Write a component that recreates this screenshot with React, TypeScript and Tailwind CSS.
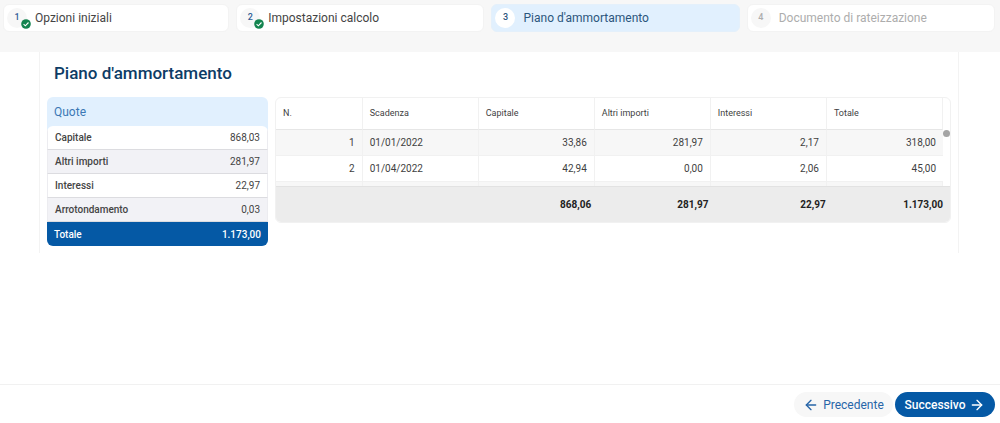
import { ArrowLeft, ArrowRight } from "lucide-react";
import clsx from "clsx";

type Step = { n: number; label: string; state: "done" | "active" | "disabled" };

const steps: Step[] = [
  { n: 1, label: "Opzioni iniziali", state: "done" },
  { n: 2, label: "Impostazioni calcolo", state: "done" },
  { n: 3, label: "Piano d'ammortamento", state: "active" },
  { n: 4, label: "Documento di rateizzazione", state: "disabled" },
];

const quote = [
  { label: "Capitale", value: "868,03" },
  { label: "Altri importi", value: "281,97" },
  { label: "Interessi", value: "22,97" },
  { label: "Arrotondamento", value: "0,03" },
];

const columns = ["N.", "Scadenza", "Capitale", "Altri importi", "Interessi", "Totale"];

const rate = [
  ["1", "01/01/2022", "33,86", "281,97", "2,17", "318,00"],
  ["2", "01/04/2022", "42,94", "0,00", "2,06", "45,00"],
];

const totals = ["", "", "868,06", "281,97", "22,97", "1.173,00"];

function DoneBadge() {
  return (
    <svg viewBox="0 0 10 10" className="absolute -right-1 -bottom-px size-[10px]" aria-hidden="true">
      <circle cx="5" cy="5" r="4.8" fill="#13844f" />
      <path d="M2.6 5.2 4.3 6.8 7.5 3.5" fill="none" stroke="#fff" strokeWidth="1.1" />
    </svg>
  );
}

function StepButton({ step }: { step: Step }) {
  const done = step.state === "done";
  const active = step.state === "active";
  const disabled = step.state === "disabled";

  return (
    <button
      type="button"
      disabled={disabled}
      aria-current={active ? "step" : undefined}
      className={clsx(
        "flex h-7 items-center rounded-md border px-[3px] text-left text-[12px]",
        active ? "border-[#e4f0fb] bg-[#e1f0fe] text-[#2c567d]" : "border-[#f3f3f3] bg-white",
        done && "text-[#444444]",
        disabled && "text-[#adadad]"
      )}
    >
      <span
        className={clsx(
          "relative flex size-5 shrink-0 items-center justify-center rounded-full text-[9px] font-medium",
          active ? "bg-white" : "bg-[#f7f7f7]",
          done && "text-[#2f5c96]"
        )}
      >
        {step.n}
        {done && <DoneBadge />}
      </span>
      <span className="ml-2">{step.label}</span>
    </button>
  );
}

function Cols() {
  return (
    <colgroup>
      <col className="w-[13%]" />
      <col />
      <col />
      <col />
      <col />
      <col />
    </colgroup>
  );
}

function QuoteTable() {
  return (
    <section className="w-[221px] shrink-0 self-start overflow-hidden rounded-md bg-[#e1f0fe] text-[10px]">
      <h2 className="flex h-[29px] items-center px-[7px] text-[12px] text-[#3b78b5]">Quote</h2>
      <table className="w-full border-separate border-spacing-0 overflow-hidden rounded-t-md bg-white text-[#444444]">
        <tbody>
          {quote.map((q) => (
            <tr key={q.label} className="h-6 even:bg-[#f2f2f6]">
              <th
                scope="row"
                className="border-b border-l border-b-[#dcdce0] border-l-[#ececf0] pl-[7px] text-left font-medium"
              >
                {q.label}
              </th>
              <td className="border-r border-b border-r-[#ececf0] border-b-[#dcdce0] pr-[7px] text-right">
                {q.value}
              </td>
            </tr>
          ))}
        </tbody>
        <tfoot>
          <tr className="h-6 bg-[#0559a5] font-medium text-white">
            <th scope="row" className="pl-[7px] text-left font-medium">
              Totale
            </th>
            <td className="pr-[7px] text-right">1.173,00</td>
          </tr>
        </tfoot>
      </table>
    </section>
  );
}

function RateTable() {
  return (
    <section className="min-w-0 flex-1 self-start overflow-hidden rounded-md border border-[#f1f1f1] text-[10px] text-[#3f3f3f]">
      <div className="flex h-[88px] overflow-hidden">
        <table className="w-full flex-1 table-fixed self-start border-separate border-spacing-0">
          <Cols />
          <thead>
            <tr className="h-8">
              {columns.map((c) => (
                <th
                  key={c}
                  scope="col"
                  className="border-r border-b border-r-[#f1f1f1] border-b-[#e6e6e6] pl-[7px] text-left text-[9px] font-normal"
                >
                  {c}
                </th>
              ))}
            </tr>
          </thead>
          <tbody>
            {rate.map((row) => (
              <tr key={row[0]} className="h-[26px] odd:bg-[#f7f7f7]">
                {row.map((cell, i) => (
                  <td
                    key={i}
                    className={clsx(
                      "border-b border-[#f1f1f1] px-[7px]",
                      i < 5 && "border-r",
                      i !== 1 && "text-right"
                    )}
                  >
                    {cell}
                  </td>
                ))}
              </tr>
            ))}
            {/* next row, cut off by the scroll area */}
            <tr className="h-[26px] bg-[#f7f7f7]">
              {columns.map((c) => (
                <td key={c} className="border-r border-[#f1f1f1]" />
              ))}
            </tr>
          </tbody>
        </table>
        <div className="w-[7px] shrink-0 pt-8">
          <div className="size-[7px] rounded-full bg-[#a5a5a5]" />
        </div>
      </div>
      <table className="w-full table-fixed border-separate border-spacing-0 border-t border-[#e2e2e2] bg-[#ececec]">
        <Cols />
        <tbody>
          <tr className="h-[35px] font-bold text-[#222222]">
            {totals.map((t, i) => (
              <td key={i} className="px-[7px] text-right">
                {t}
              </td>
            ))}
          </tr>
        </tbody>
      </table>
    </section>
  );
}

export default function App() {
  return (
    <div className="flex min-h-screen flex-col bg-white font-[Roboto,sans-serif]">
      {/* STEPS */}
      <nav className="grid grid-cols-[226fr_248fr_248fr_248fr] gap-[7px] bg-[#f7f7f7] pt-1 pr-[5px] pb-5 pl-[3px]">
        {steps.map((s) => (
          <StepButton key={s.n} step={s} />
        ))}
      </nav>

      {/* CONTENT */}
      <div className="flex-1 pr-[41px] pl-[39px]">
        <main className="border-x border-[#f3f3f3] px-[7px] pb-[7px]">
          <h1 className="flex h-[45px] items-center px-[7px] pb-[2px] text-[17px] font-medium text-[#0d3c66]">
            Piano d'ammortamento
          </h1>
          <div className="flex gap-[7px]">
            <QuoteTable />
            <RateTable />
          </div>
        </main>
      </div>

      {/* ACTIONS */}
      <footer className="flex justify-end gap-[2px] border-t border-[#f1f1f1] px-[5px] pt-[7px] pb-[6px] text-[12px]">
        <button
          type="button"
          className="flex h-[25px] w-[99px] items-center justify-center gap-1 rounded-full bg-[#f7f7f7] text-[#2765a8]"
        >
          <ArrowLeft size={16} />
          Precedente
        </button>
        <button
          type="button"
          className="flex h-[25px] w-[100px] items-center justify-center gap-1 rounded-full bg-[#0559a5] font-medium text-white"
        >
          Successivo
          <ArrowRight size={16} />
        </button>
      </footer>
    </div>
  );
}
